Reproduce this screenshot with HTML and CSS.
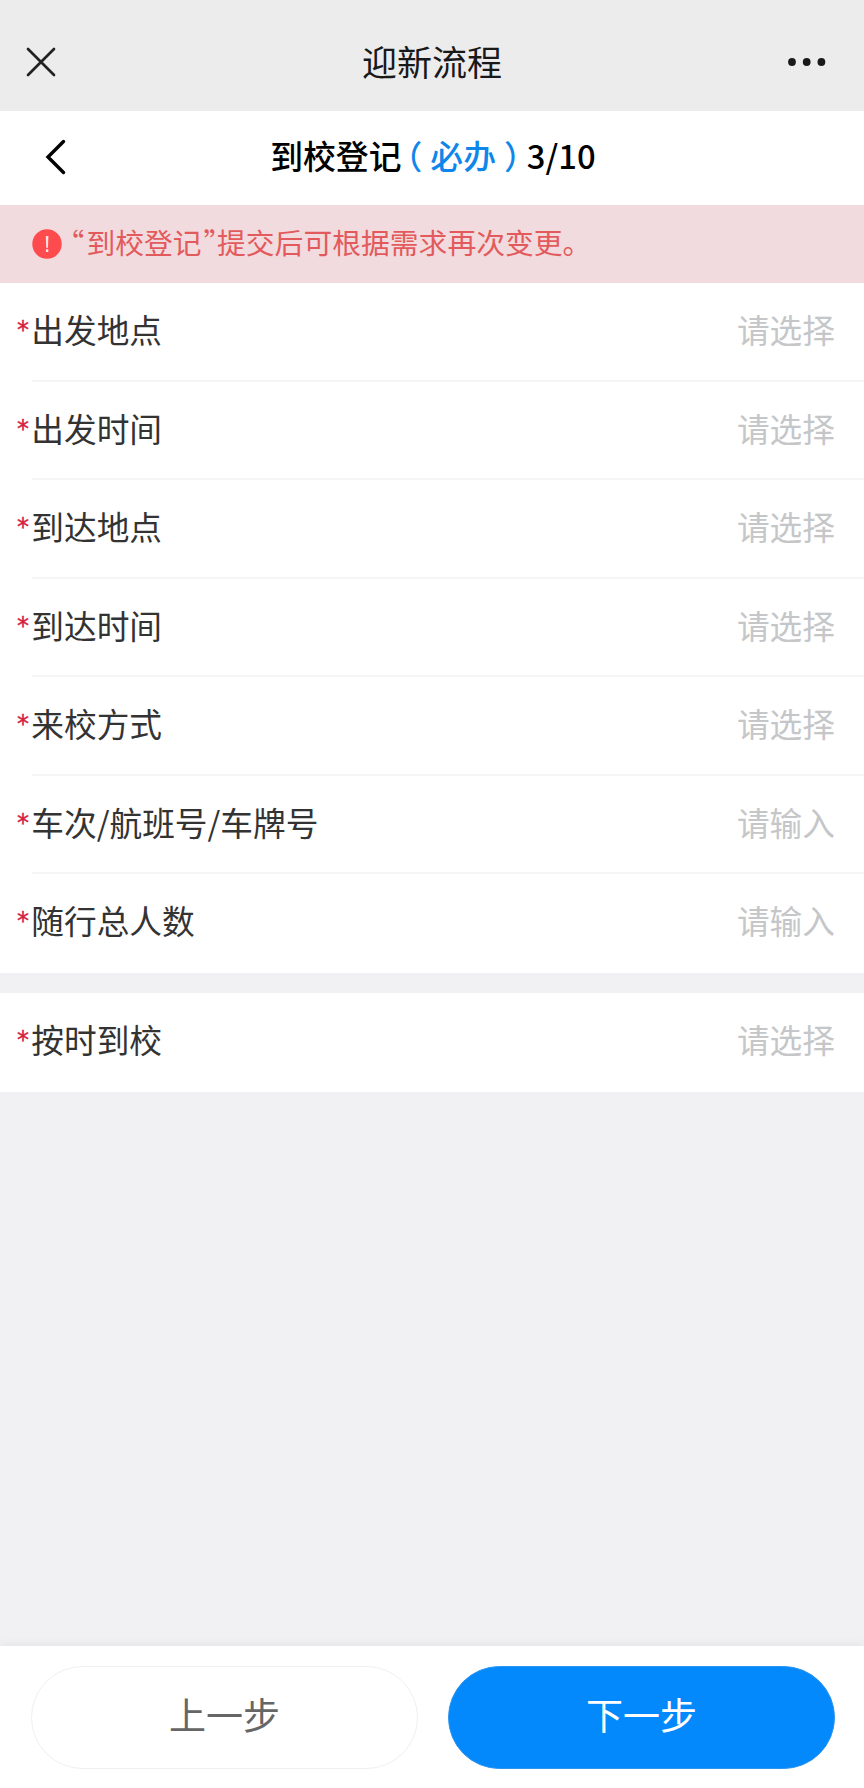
FILE: index.html
```
<!DOCTYPE html>
<html lang="zh-CN">
<head>
<meta charset="utf-8">
<title>迎新流程</title>
<link rel="stylesheet" href="styles.css">
</head>
<body>
<div class="page">
  <header class="appbar">
    <svg class="close" viewBox="0 0 30 30"><path d="M2 2 28 28M28 2 2 28"/></svg>
    <h1 class="appbar-title">迎新流程</h1>
    <svg class="more" viewBox="0 0 38 10"><circle cx="4" cy="5" r="3.9"/><circle cx="18.7" cy="5" r="3.9"/><circle cx="33.4" cy="5" r="3.9"/></svg>
  </header>
  <nav class="navbar">
    <svg class="back" viewBox="0 0 22 36"><path d="M18.5 2.5 3 18 18.5 33.5"/></svg>
    <h2 class="nav-title">到校登记<span class="required"><span class="paren-open">（</span>必办<span class="paren-close">）</span></span><span class="step">3/10</span></h2>
  </nav>
  <div class="notice">
    <svg class="alert" viewBox="0 0 30 30"><circle cx="15" cy="15" r="14.7"/><path d="M13.8 7h2.6l-.4 11.8h-1.8zM13.9 20.3h2.4v2.6h-2.4z"/></svg>
    <p class="notice-text"><span class="quote">“</span>到校登记<span class="quote quote-end">”</span>提交后可根据需求再次变更。</p>
  </div>
  <main class="form">
    <section class="group">
      <div class="row"><span class="star">*</span><span class="label">出发地点</span><span class="value">请选择</span></div>
      <div class="row"><span class="star">*</span><span class="label">出发时间</span><span class="value">请选择</span></div>
      <div class="row"><span class="star">*</span><span class="label">到达地点</span><span class="value">请选择</span></div>
      <div class="row"><span class="star">*</span><span class="label">到达时间</span><span class="value">请选择</span></div>
      <div class="row"><span class="star">*</span><span class="label">来校方式</span><span class="value">请选择</span></div>
      <div class="row"><span class="star">*</span><span class="label">车次/航班号/车牌号</span><span class="value">请输入</span></div>
      <div class="row"><span class="star">*</span><span class="label">随行总人数</span><span class="value">请输入</span></div>
    </section>
    <section class="group">
      <div class="row"><span class="star">*</span><span class="label">按时到校</span><span class="value">请选择</span></div>
    </section>
  </main>
  <footer class="actions">
    <button class="btn">上一步</button>
    <button class="btn btn-primary">下一步</button>
  </footer>
</div>
</body>
</html>
```
FILE: styles.css
```
* { box-sizing: border-box; }
body {
  margin: 0;
  font-family: "Noto Sans CJK SC", sans-serif;
  color: #333;
}
h1, h2, p { margin: 0; }
.page {
  display: flex;
  flex-direction: column;
  width: 864px;
  height: 1788px;
  background: #f1f1f3;
}
.appbar {
  display: grid;
  grid-template-columns: 100px 1fr 100px;
  align-items: center;
  height: 111px;
  padding-top: 13px;
  background: #ececec;
}
.close {
  width: 30px;
  height: 30px;
  margin-left: 26px;
  fill: none;
  stroke: #222;
  stroke-width: 2.7;
  stroke-linecap: round;
}
.appbar-title {
  padding-bottom: 2px;
  font-size: 35px;
  line-height: 50px;
  font-weight: 400;
  text-align: center;
  color: #191919;
}
.more {
  width: 38px;
  height: 10px;
  margin-left: 24px;
  fill: #191919;
}
.navbar {
  display: grid;
  grid-template-columns: 100px 1fr 100px;
  align-items: center;
  height: 94px;
  padding-bottom: 2px;
  background: #fff;
}
.back {
  width: 22px;
  height: 36px;
  margin-left: 45px;
  fill: none;
  stroke: #000;
  stroke-width: 3.4;
  stroke-linecap: round;
}
.nav-title {
  padding: 0 0 4px 2px;
  font-size: 32.8px;
  line-height: 48px;
  font-weight: 500;
  text-align: center;
  white-space: nowrap;
  color: #000;
}
.required { color: #0f87ea; }
.paren-open, .paren-close, .quote { font-feature-settings: "halt"; }
.paren-open { margin: 0 8px 0 4.5px; }
.paren-close { margin: 0 6.5px 0 8px; }
.notice {
  display: flex;
  align-items: center;
  height: 78px;
  padding-left: 32px;
  background: #f2dbde;
}
.alert { width: 30px; height: 30px; }
.alert circle { fill: #fd4b4e; }
.alert path { fill: #ffdfe0; }
.notice-text {
  margin-left: 8px;
  padding-bottom: 4px;
  font-size: 28.8px;
  line-height: 42px;
  white-space: nowrap;
  color: #e35a5c;
}
.quote { margin-right: 2px; }
.quote-end { margin: 0 -1px 0 2px; }
.form {
  display: flex;
  flex-direction: column;
  gap: 20.5px;
}
.group { background: #fff; }
.row {
  display: grid;
  grid-template-columns: 14.3px 1fr auto;
  align-items: center;
  height: 98.5px;
  padding: 0 29px 6px 17px;
  font-size: 32.7px;
  line-height: 48px;
}
.row:not(:last-child) {
  background: linear-gradient(#f5f5f6, #f5f5f6) 32px 100% / 100% 2px no-repeat;
}
.star {
  padding-top: 2px;
  font-family: "DejaVu Sans", sans-serif;
  font-size: 24px;
  color: #d5203e;
  -webkit-text-stroke: .4px #d5203e;
}
.label { white-space: nowrap; }
.value { color: #c5c6c8; }
.actions {
  display: flex;
  gap: 30px;
  height: 142px;
  margin-top: auto;
  padding: 20px 29px 0 31px;
  background: #fff;
  box-shadow: 0 0 10px rgba(0, 0, 0, .08);
}
.btn {
  flex: 1;
  height: 103px;
  padding: 0 0 8px;
  border: 1.5px solid #efefef;
  border-radius: 52px;
  background: #fff;
  font: 400 37px/54px "Noto Sans CJK SC", sans-serif;
  color: #666;
}
.btn-primary {
  border-color: #2b93f0;
  background: #0389fb;
  color: #fff;
}
```
